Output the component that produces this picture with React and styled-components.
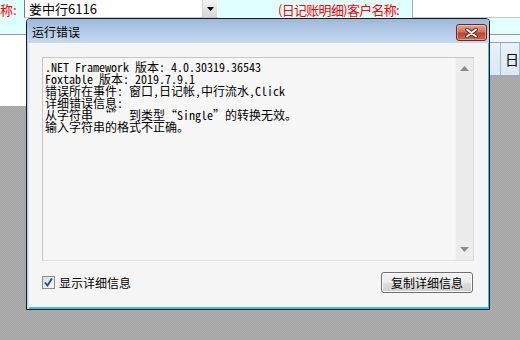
import React from "react";
import styled, { createGlobalStyle } from "styled-components";

const GlobalStyle = createGlobalStyle`
  html, body {
    margin: 0;
    padding: 0;
    background: #a9a9a9;
  }
  body {
    font-family: "Noto Sans CJK SC", "Noto Sans", sans-serif;
  }
`;

const details = [
  ".NET Framework 版本: 4.0.30319.36543",
  "Foxtable 版本: 2019.7.9.1",
  "错误所在事件: 窗口,日记帐,中行流水,Click",
  "详细错误信息:",
  "从字符串 “” 到类型“Single”的转换无效。",
  "输入字符串的格式不正确。",
].join("\n");

function App() {
  return (
    <Screen>
      <GlobalStyle />
      <TopPanel>
        <RedLabel>称:</RedLabel>
        <Combo>
          <ComboText>娄中行6116</ComboText>
          <ComboButton>
            <svg width="7" height="4" viewBox="0 0 7 4">
              <path d="M0 0h7L3.5 4z" fill="#000" />
            </svg>
          </ComboButton>
        </Combo>
        <RedLabel $wide>(日记账明细)客户名称:</RedLabel>
        <TextInput />
      </TopPanel>
      <Workspace>
        <LeftPane />
        <GridPane>
          <GridStrip />
          <HeaderRow>
            <HeaderCell $w={222} />
            <HeaderCell>日</HeaderCell>
          </HeaderRow>
        </GridPane>
      </Workspace>

      <Dialog>
        <TitleBar>
          <Title>运行错误</Title>
          <CloseButton>
            <svg width="13" height="10" viewBox="0 0 13 10">
              <path d="M2 1.5l9 7M11 1.5l-9 7" stroke="#4a1d16" strokeWidth="3.6" strokeLinecap="round" />
              <path d="M2 1.5l9 7M11 1.5l-9 7" stroke="#fff" strokeWidth="2" strokeLinecap="round" />
            </svg>
          </CloseButton>
        </TitleBar>
        <DialogBody>
          <DetailBox>
            <DetailText>{details}</DetailText>
            <ScrollBar>
              <svg width="9" height="5" viewBox="0 0 9 5">
                <path d="M0 5h9L4.5 0z" fill="#8a8a8a" />
              </svg>
              <svg width="9" height="5" viewBox="0 0 9 5">
                <path d="M0 0h9L4.5 5z" fill="#8a8a8a" />
              </svg>
            </ScrollBar>
          </DetailBox>
          <Footer>
            <CheckLabel>
              <CheckBox>
                <svg width="11" height="11" viewBox="0 0 11 11">
                  <path d="M2 5.5l2.5 3L9 1.5" stroke="#2c3f8f" strokeWidth="1.8" fill="none" />
                </svg>
              </CheckBox>
              显示详细信息
            </CheckLabel>
            <Button>复制详细信息</Button>
          </Footer>
        </DialogBody>
      </Dialog>
    </Screen>
  );
}

export default App;

const Screen = styled.div`
  position: relative;
  width: 520px;
  height: 340px;
  overflow: hidden;
  background-color: #a9a9a9;
  background-image: repeating-conic-gradient(#a5a5a5 0 25%, #adadad 0 50%);
  background-size: 2px 2px;
`;

const TopPanel = styled.div`
  display: flex;
  align-items: flex-start;
  height: 34px;
  background: #e0ffff;
  border-bottom: 1px solid #9a9a9a;
`;

const RedLabel = styled.span`
  width: ${(p) => (p.$wide ? "auto" : "24px")};
  margin-left: ${(p) => (p.$wide ? "60px" : "0")};
  margin-top: 1px;
  font-size: 13px;
  line-height: 17px;
  letter-spacing: ${(p) => (p.$wide ? "-0.7px" : "0")};
  color: #ff0000;
  white-space: nowrap;
`;

const Combo = styled.div`
  display: flex;
  width: 193px;
  height: 17px;
  background: #fff;
  border-left: 1px solid #7a7a7a;
  border-bottom: 1px solid #c8c8c8;
`;

const ComboText = styled.span`
  flex: 1;
  padding-left: 4px;
  font-size: 13px;
  line-height: 17px;
  color: #000;
`;

const ComboButton = styled.span`
  display: flex;
  align-items: center;
  justify-content: center;
  width: 14px;
  margin-right: 1px;
  background: linear-gradient(#f4f4f4, #d6d6d6);
  border-left: 1px solid #d0d0d0;
`;

const TextInput = styled.div`
  flex: 1;
  height: 17px;
  margin-left: 13px;
  background: #fff;
  border-left: 1px solid #a8a8a8;
  border-bottom: 1px solid #c8c8c8;
`;

const Workspace = styled.div`
  display: flex;
`;

const LeftPane = styled.div`
  width: 280px;
  height: 71px;
  background: #fff;
`;

const GridPane = styled.div`
  flex: 1;
  display: flex;
  flex-direction: column;
`;

const GridStrip = styled.div`
  height: 7px;
  background: #eefafd;
  border-bottom: 1px solid #8ea3bd;
`;

const HeaderRow = styled.div`
  display: flex;
  height: 32px;
  background: linear-gradient(#e8f1fb, #dbe8f7);
  border-bottom: 1px solid #9aaac0;
`;

const HeaderCell = styled.div`
  width: ${(p) => (p.$w ? `${p.$w}px` : "auto")};
  flex: ${(p) => (p.$w ? "none" : 1)};
  padding-left: 4px;
  border-right: 1px solid #a9bbd2;
  font-size: 14px;
  line-height: 32px;
  color: #000;
`;

const Dialog = styled.div`
  position: absolute;
  left: 26px;
  top: 18px;
  width: 462px;
  height: 290px;
  display: flex;
  flex-direction: column;
  border: 1px solid #1b1b1b;
  border-radius: 4px 4px 0 0;
  background: #f5f5f5;
`;

const TitleBar = styled.div`
  display: flex;
  align-items: center;
  justify-content: space-between;
  height: 24px;
  padding: 0 2px 0 5px;
  border-radius: 3px 3px 0 0;
  background: linear-gradient(#9db8d8, #b7cde8 60%, #c5d8ee);
`;

const Title = styled.span`
  font-size: 12px;
  line-height: 14px;
  margin-top: 2px;
  color: #000;
`;

const CloseButton = styled.span`
  display: flex;
  align-items: center;
  justify-content: center;
  width: 29px;
  height: 15px;
  margin-top: 3px;
  border: 1px solid #6e2a22;
  border-radius: 3px;
  background: linear-gradient(#e4a596, #d2715f 45%, #bd4330 55%, #cf6a52);
  box-shadow: inset 0 0 0 1px rgba(255, 255, 255, 0.35);
`;

const DialogBody = styled.div`
  flex: 1;
  display: flex;
  flex-direction: column;
  padding: 14px 15px 0 15px;
  box-shadow: inset 1px 0 #b6cfee, inset 2px 0 #dbe7f5, inset -1px 0 #35c2e3,
    inset 0 -2px #35c2e3;
`;

const DetailBox = styled.div`
  display: flex;
  height: 202px;
  background: #f7f7f7;
  border: 1px solid #c6c6c6;
  border-right-color: #dcdcdc;
  border-bottom-color: #e2e2e2;
`;

const DetailText = styled.div`
  flex: 1;
  padding: 3px 2px;
  font-family: "Noto Sans Mono CJK SC", "Liberation Mono", "Noto Sans CJK SC", monospace;
  font-size: 12px;
  line-height: 12px;
  color: #000;
  white-space: pre;
  overflow: hidden;
`;

const ScrollBar = styled.div`
  display: flex;
  flex-direction: column;
  justify-content: space-between;
  align-items: center;
  width: 17px;
  padding: 8px 0;
  background: #ececec;
  border-left: 1px solid #f4f4f4;
`;

const Footer = styled.div`
  display: flex;
  align-items: center;
  justify-content: space-between;
  margin-top: 11px;
  padding-right: 1px;
`;

const CheckLabel = styled.label`
  display: flex;
  align-items: center;
  gap: 4px;
  font-size: 12px;
  color: #000;
`;

const CheckBox = styled.span`
  display: flex;
  align-items: center;
  justify-content: center;
  width: 11px;
  height: 11px;
  border: 1px solid #8e8f8f;
  background: linear-gradient(135deg, #dcdcdc, #f8f8f8);
`;

const Button = styled.button`
  width: 92px;
  height: 21px;
  padding: 0;
  border: 1px solid #707070;
  border-radius: 3px;
  background: linear-gradient(#f2f2f2, #ebebeb 50%, #dddddd 51%, #cfcfcf);
  box-shadow: inset 0 0 0 1px #fcfcfc;
  font-family: "Noto Sans CJK SC", sans-serif;
  font-size: 12px;
  color: #000;
`;
